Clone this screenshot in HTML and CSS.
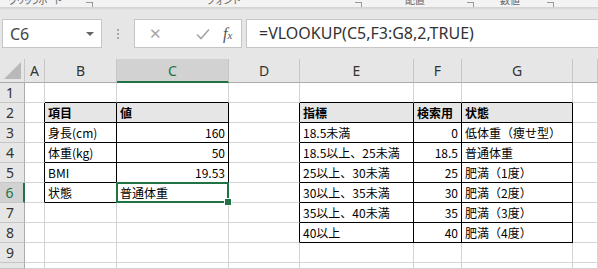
FILE: index.html
```html
<!DOCTYPE html>
<html lang="ja">
<head>
    <meta charset="UTF-8">
    <title>VLOOKUP BMI</title>
    <link rel="stylesheet" href="styles.css">
</head>
<body>
    <div class="ribbon">
        <span class="group-label gl-clip">クリップボード</span>
        <span class="launcher l-clip"></span>
        <span class="group-label gl-font">フォント</span>
        <span class="launcher l-font"></span>
        <span class="group-label gl-align">配置</span>
        <span class="launcher l-align"></span>
        <span class="group-label gl-num">数値</span>
        <span class="launcher l-num"></span>
    </div>

    <div class="formula-bar">
        <div class="name-box">
            <span>C6</span>
            <span class="drop"></span>
        </div>
        <div class="grip"><i></i><i></i><i></i></div>
        <div class="fx-buttons">
            <span class="btn-x">✕</span>
            <svg class="btn-ok" width="14" height="12" viewBox="0 0 14 12"><path d="M1 6.5 L5 10.5 L13 1.5" fill="none" stroke="#a6a6a6" stroke-width="1.6"/></svg>
            <span class="btn-fx">f<small>x</small></span>
        </div>
        <div class="formula-input">=VLOOKUP(C5,F3:G8,2,TRUE)</div>
    </div>

    <div class="sheet">
        <!-- column headers -->
        <div class="corner"><span class="tri"></span></div>
        <div class="hd">A</div>
        <div class="hd">B</div>
        <div class="hd hd-sel">C</div>
        <div class="hd">D</div>
        <div class="hd">E</div>
        <div class="hd">F</div>
        <div class="hd">G</div>
        <div class="hd"></div>

        <!-- row 1 -->
        <div class="rh">1</div>
        <div class="c"></div>
        <div class="c bk-b"></div>
        <div class="c bk-b"></div>
        <div class="c"></div>
        <div class="c bk-b"></div>
        <div class="c bk-b"></div>
        <div class="c bk-b"></div>
        <div class="c"></div>

        <!-- row 2 -->
        <div class="rh">2</div>
        <div class="c bk-r"></div>
        <div class="c bk-r bk-b th">項目</div>
        <div class="c bk-r bk-b th">値</div>
        <div class="c bk-r"></div>
        <div class="c bk-r bk-b th">指標</div>
        <div class="c bk-r bk-b th">検索用</div>
        <div class="c bk-r bk-b th">状態</div>
        <div class="c"></div>

        <!-- row 3 -->
        <div class="rh">3</div>
        <div class="c bk-r"></div>
        <div class="c bk-r bk-b">身長(cm)</div>
        <div class="c bk-r bk-b num">160</div>
        <div class="c bk-r"></div>
        <div class="c bk-r bk-b">18.5未満</div>
        <div class="c bk-r bk-b num">0</div>
        <div class="c bk-r bk-b">低体重（痩せ型）</div>
        <div class="c"></div>

        <!-- row 4 -->
        <div class="rh">4</div>
        <div class="c bk-r"></div>
        <div class="c bk-r bk-b">体重(kg)</div>
        <div class="c bk-r bk-b num">50</div>
        <div class="c bk-r"></div>
        <div class="c bk-r bk-b">18.5以上、25未満</div>
        <div class="c bk-r bk-b num">18.5</div>
        <div class="c bk-r bk-b">普通体重</div>
        <div class="c"></div>

        <!-- row 5 -->
        <div class="rh">5</div>
        <div class="c bk-r"></div>
        <div class="c bk-r bk-b">BMI</div>
        <div class="c bk-r bk-b num">19.53</div>
        <div class="c bk-r"></div>
        <div class="c bk-r bk-b">25以上、30未満</div>
        <div class="c bk-r bk-b num">25</div>
        <div class="c bk-r bk-b">肥満（1度）</div>
        <div class="c"></div>

        <!-- row 6 -->
        <div class="rh rh-sel">6</div>
        <div class="c bk-r"></div>
        <div class="c bk-r bk-b">状態</div>
        <div class="c bk-r bk-b active">普通体重<span class="sel-box"><span class="handle"></span></span></div>
        <div class="c bk-r"></div>
        <div class="c bk-r bk-b">30以上、35未満</div>
        <div class="c bk-r bk-b num">30</div>
        <div class="c bk-r bk-b">肥満（2度）</div>
        <div class="c"></div>

        <!-- row 7 -->
        <div class="rh">7</div>
        <div class="c"></div>
        <div class="c"></div>
        <div class="c"></div>
        <div class="c bk-r"></div>
        <div class="c bk-r bk-b">35以上、40未満</div>
        <div class="c bk-r bk-b num">35</div>
        <div class="c bk-r bk-b">肥満（3度）</div>
        <div class="c"></div>

        <!-- row 8 -->
        <div class="rh">8</div>
        <div class="c"></div>
        <div class="c"></div>
        <div class="c"></div>
        <div class="c bk-r"></div>
        <div class="c bk-r bk-b">40以上</div>
        <div class="c bk-r bk-b num">40</div>
        <div class="c bk-r bk-b">肥満（4度）</div>
        <div class="c"></div>

        <!-- row 9 -->
        <div class="rh">9</div>
        <div class="c"></div>
        <div class="c"></div>
        <div class="c"></div>
        <div class="c"></div>
        <div class="c"></div>
        <div class="c"></div>
        <div class="c"></div>
        <div class="c"></div>

        <!-- row 10 -->
        <div class="rh">10</div>
        <div class="c"></div>
        <div class="c"></div>
        <div class="c"></div>
        <div class="c"></div>
        <div class="c"></div>
        <div class="c"></div>
        <div class="c"></div>
        <div class="c"></div>
    </div>
</body>
</html>
```

FILE: styles.css
```css
body, html {
    margin: 0;
    padding: 0;
    width: 598px;
    height: 269px;
    overflow: hidden;
    background: #fff;
    font-family: "Noto Sans", "Noto Sans CJK JP", sans-serif;
}

/* ribbon strip (cut off at the top, like the screenshot) */
.ribbon {
    height: 7px;
    background: #f3f3f3;
    border-bottom: 1px solid #d4d4d4;
    box-shadow: 0 1px 2px rgba(0, 0, 0, 0.08);
    display: flex;
    align-items: flex-end;
    overflow: hidden;
    position: relative;
    z-index: 2;
}

.group-label {
    font-size: 10px;
    line-height: 14px;
    color: #666;
    white-space: nowrap;
    flex: none;
}

.launcher {
    flex: none;
    width: 6px;
    height: 4px;
    border: 1px solid #999;
    border-bottom: none;
    border-left: none;
}

.gl-clip { margin-left: 8px; width: 52px; letter-spacing: -2.5px; }
.l-clip { margin-left: 26px; }
.gl-font { margin-left: 113px; letter-spacing: -1.5px; }
.l-font { margin-left: 115px; }
.gl-align { margin-left: 43px; }
.l-align { margin-left: 42px; }
.gl-num { margin-left: 26px; }
.l-num { margin-left: 27px; }

/* formula bar */
.formula-bar {
    height: 29px;
    padding: 11px 0 11px 2px;
    background: #e6e6e6;
    display: flex;
    align-items: stretch;
}

.name-box {
    width: 100px;
    flex: none;
    background: #fff;
    border: 1px solid #c6c6c6;
    display: flex;
    align-items: center;
    justify-content: space-between;
    padding: 0 7px;
    box-sizing: border-box;
    font-size: 16px;
    color: #444;
}

.drop {
    width: 0;
    height: 0;
    border-left: 4px solid transparent;
    border-right: 4px solid transparent;
    border-top: 4px solid #666;
}

.grip {
    width: 32px;
    flex: none;
    display: flex;
    flex-direction: column;
    align-items: center;
    justify-content: center;
    gap: 2px;
}

.grip i {
    width: 2px;
    height: 2px;
    background: #a8a8a8;
}

.fx-buttons {
    width: 108px;
    flex: none;
    background: #fff;
    border: 1px solid #c6c6c6;
    box-sizing: border-box;
    display: flex;
    align-items: center;
    padding-left: 14px;
}

.btn-x {
    color: #a6a6a6;
    font-size: 15px;
    width: 36px;
    font-family: "DejaVu Sans", sans-serif;
}

.btn-ok {
    width: 36px;
}

.btn-fx {
    font-family: "Liberation Serif", serif;
    font-style: italic;
    font-size: 16px;
    color: #555;
    margin-left: 2px;
}

.btn-fx small {
    font-size: 11px;
}

.formula-input {
    flex: 1;
    min-width: 0;
    margin-left: 4px;
    background: #fff;
    border: 1px solid #c6c6c6;
    border-right: none;
    padding-left: 12px;
    font-size: 16px;
    line-height: 27px;
    color: #333;
    white-space: nowrap;
}

/* sheet */
.sheet {
    display: grid;
    grid-template-columns: 25px 20px 72px 112px 71px 114px 48px 111px 25px;
    grid-template-rows: 24px repeat(9, 20px) 6px;
    overflow: hidden;
    background: #fff;
}

.corner, .hd, .rh, .c {
    box-sizing: border-box;
}

.corner {
    background: #e6e6e6;
    border-right: 1px solid #c6c6c6;
    border-bottom: 1px solid #ababab;
    position: relative;
}

.tri {
    position: absolute;
    right: 3px;
    bottom: 3px;
    width: 0;
    height: 0;
    border-left: 17px solid transparent;
    border-bottom: 17px solid #b9b9b9;
}

.hd {
    background: #e6e6e6;
    border-right: 1px solid #c6c6c6;
    border-bottom: 1px solid #ababab;
    text-align: center;
    font-size: 14px;
    line-height: 23px;
    color: #333;
}

.hd-sel {
    background: #d2d2d2;
    color: #217346;
    border-bottom: 2px solid #217346;
}

.rh {
    background: #e6e6e6;
    border-right: 1px solid #ababab;
    border-bottom: 1px solid #c6c6c6;
    text-align: center;
    font-size: 14px;
    line-height: 19px;
    color: #333;
    padding-right: 4px;
    overflow: hidden;
}

.rh-sel {
    background: #d2d2d2;
    color: #217346;
    border-right: 2px solid #217346;
}

.c {
    border-right: 1px solid #d4d4d4;
    border-bottom: 1px solid #d4d4d4;
    font-family: "Noto Sans CJK JP", sans-serif;
    font-size: 12px;
    line-height: 20px;
    padding: 0 3px;
    color: #000;
    white-space: nowrap;
}

.bk-r {
    border-right-color: #000;
}

.bk-b {
    border-bottom-color: #000;
}

.th {
    background: #e7e6e6;
    font-weight: bold;
}

.num {
    text-align: right;
}

.active {
    position: relative;
}

.sel-box {
    position: absolute;
    top: -1px;
    left: -1px;
    right: -1px;
    bottom: -1px;
    border: 2px solid #217346;
}

.handle {
    position: absolute;
    right: -5px;
    bottom: -5px;
    width: 6px;
    height: 6px;
    background: #217346;
    border: 1px solid #fff;
}
```
